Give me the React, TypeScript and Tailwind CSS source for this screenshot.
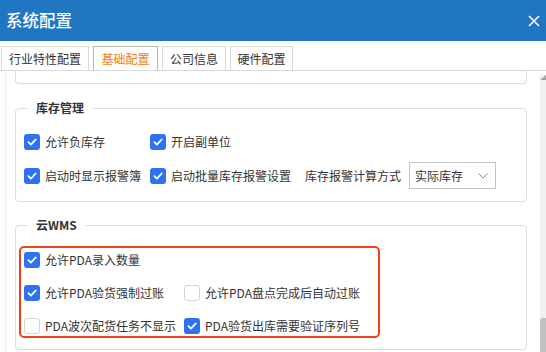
import React from 'react';

const FONT = '"Noto Sans CJK SC", "Noto Sans", sans-serif';

const TABS = [
  { name: '行业特性配置', w: 'w-[88px]' },
  { name: '基础配置', w: 'w-[65px]', active: true },
  { name: '公司信息', w: 'w-[64px]' },
  { name: '硬件配置', w: 'w-[63px]' }
];

function Box({ checked }: { checked: boolean }) {
  if (!checked) {
    return <span className="h-4 w-4 shrink-0 rounded-[3px] border border-[#d6d6d6] bg-white" />;
  }
  return (
    <span className="flex h-4 w-4 shrink-0 items-center justify-center rounded-[3px] bg-[#2f72ef]">
      <svg width="12" height="12" viewBox="0 0 12 12">
        <path d="M2.4 6.1 4.9 8.6 9.7 3.5" fill="none" stroke="#fff" strokeWidth="1.8" strokeLinecap="round" strokeLinejoin="round" />
      </svg>
    </span>
  );
}

function Check({ label, checked = true, className = '' }: { label: string; checked?: boolean; className?: string }) {
  return (
    <label className={`flex items-center gap-[5px] ${className}`}>
      <Box checked={checked} />
      <span>{label}</span>
    </label>
  );
}

export default function App() {
  return (
    <div className="h-[352px] w-[546px] overflow-hidden bg-white text-[12px] text-[#333]" style={{ fontFamily: FONT }}>
      {/* title bar */}
      <div className="flex h-[41px] items-center justify-between bg-[#2176c1] pl-[6px] pr-[6px]">
        <span className="text-[16.5px] font-medium text-white">系统配置</span>
        <svg width="12" height="12" viewBox="0 0 12 12">
          <path d="M1 1 11 11M11 1 1 11" stroke="#fff" strokeWidth="1.5" />
        </svg>
      </div>

      {/* tabs */}
      <div className="flex h-[30px] items-end gap-[4px] border-b border-[#d9d9d9] pl-px">
        {TABS.map(t => (
          <div
            key={t.name}
            className={`flex h-[24px] ${t.w} items-center justify-center border border-b-0 ${
              t.active ? 'border-[#b5b5b5] text-[#ef7d10]' : 'border-[#dadada] text-[#333]'
            }`}
          >
            {t.name}
          </div>
        ))}
      </div>

      {/* body */}
      <div className="flex h-[281px]">
        <div className="ml-[5px] flex-1 border-l border-[#ececec] pl-[9px]">
          <div className="h-[13px] w-[512px] rounded-b-[4px] border-x border-b border-[#d6dee8]" />

          <fieldset className="mt-[16px] w-[512px] rounded-[4px] border border-[#d6dee8] px-[3px] pb-[12px]">
            <legend className="ml-[9px] px-2 font-semibold leading-[16px] text-[#333]">库存管理</legend>
            <div className="flex flex-col gap-[7px] pl-[5px] pt-[12px]">
              <div className="flex h-[27px] items-center">
                <Check label="允许负库存" className="w-[126px]" />
                <Check label="开启副单位" />
              </div>
              <div className="flex h-[27px] items-center">
                <Check label="启动时显示报警簿" className="w-[126px]" />
                <Check label="启动批量库存报警设置" />
                <span className="ml-[14px]">库存报警计算方式</span>
                <div className="ml-[8px] flex h-[27px] w-[87px] items-center justify-between border border-[#c4c4c4] pl-[5px] pr-[7px]">
                  <span>实际库存</span>
                  <svg width="10" height="6" viewBox="0 0 10 6">
                    <path d="M0.5 0.5 5 5 9.5 0.5" fill="none" stroke="#8a8a8a" strokeWidth="1" />
                  </svg>
                </div>
              </div>
            </div>
          </fieldset>

          <fieldset className="mt-[15px] w-[512px] rounded-[4px] border border-[#d6dee8] px-[3px] pb-[11px]">
            <legend className="ml-[9px] px-2 font-semibold leading-[16px] text-[#333]">云WMS</legend>
            <div className="mt-[13px] flex w-[361px] flex-col gap-[13px] rounded-[5px] border-2 border-[#f2401c] pl-[3px] pt-[2px]">
              <div className="flex h-5 items-center">
                <Check label="允许PDA录入数量" />
              </div>
              <div className="flex h-5 items-center">
                <Check label="允许PDA验货强制过账" className="w-[160px]" />
                <Check label="允许PDA盘点完成后自动过账" checked={false} />
              </div>
              <div className="flex h-5 items-center">
                <Check label="PDA波次配货任务不显示" checked={false} className="w-[160px]" />
                <Check label="PDA验货出库需要验证序列号" />
              </div>
            </div>
          </fieldset>
        </div>

        {/* scrollbar */}
        <div className="mt-[4px] flex w-[6px] flex-col bg-[#f1f1f1]">
          <svg width="6" height="5" viewBox="0 0 6 5">
            <polygon points="0,5 6,0 6,5" fill="#a3a3a3" />
          </svg>
          <div className="mt-auto h-[34px] rounded-tl-[3px] bg-[#c1c1c1]" />
        </div>
      </div>
    </div>
  );
}
